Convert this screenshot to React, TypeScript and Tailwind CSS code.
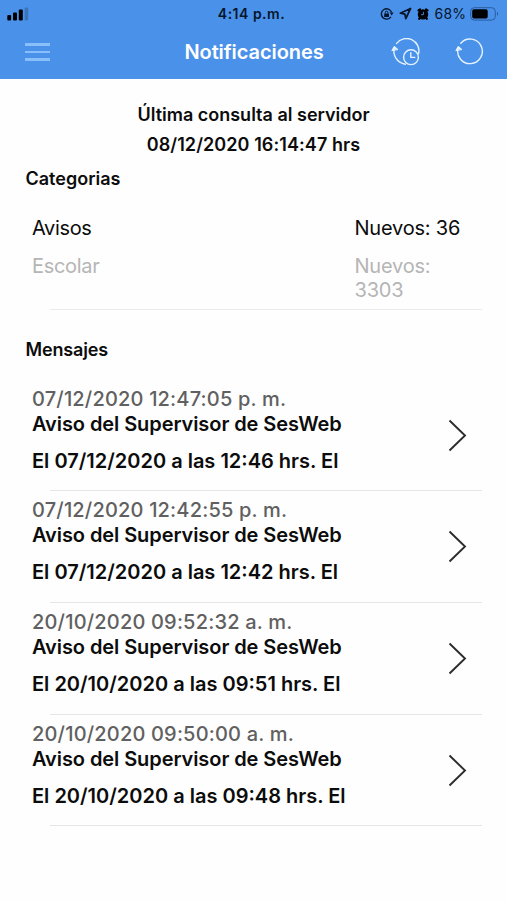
import React from "react";

const messages = [
  {
    date: "07/12/2020 12:47:05 p. m.",
    title: "Aviso del Supervisor de SesWeb",
    body: "El 07/12/2020 a las 12:46 hrs. El",
  },
  {
    date: "07/12/2020 12:42:55 p. m.",
    title: "Aviso del Supervisor de SesWeb",
    body: "El 07/12/2020 a las 12:42 hrs. El",
  },
  {
    date: "20/10/2020 09:52:32 a. m.",
    title: "Aviso del Supervisor de SesWeb",
    body: "El 20/10/2020 a las 09:51 hrs. El",
  },
  {
    date: "20/10/2020 09:50:00 a. m.",
    title: "Aviso del Supervisor de SesWeb",
    body: "El 20/10/2020 a las 09:48 hrs. El",
  },
];

const StatusBar = () => {
  return (
    <div className="grid grid-cols-3 items-center h-[27px] pl-[7px] pr-[8px] text-[#06162b]">
      <svg width="22" height="14" viewBox="0 0 22 14" fill="#000">
        <rect x="0.3" y="8" width="3.8" height="5.5" rx="1" />
        <rect x="6" y="5.5" width="4" height="8" rx="1" />
        <rect x="11.8" y="2.5" width="4" height="11" rx="1" />
        <rect x="17.6" y="0.5" width="3.6" height="13" rx="1" opacity="0.2" />
      </svg>
      <div className="-ml-[3px] text-center text-[14px] font-semibold tracking-[0.5px]">
        4:14 p.m.
      </div>
      <div className="flex items-center justify-end">
        <svg width="14" height="14" viewBox="0 0 14 14" fill="none" stroke="currentColor">
          <path d="M10.9 9.8A5.2 5.2 0 1 1 11.5 5.4" strokeWidth="1.4" />
          <path d="M9.8 5.6h3.8l-1.9 2.8z" fill="currentColor" stroke="none" />
          <rect x="4.2" y="6.4" width="4.8" height="3.5" rx="0.5" fill="currentColor" stroke="none" />
          <path d="M5.3 6.6V5.4a1.3 1.3 0 0 1 2.6 0v1.2" strokeWidth="1" />
        </svg>
        <svg className="ml-[5px]" width="13" height="13" viewBox="0 0 13 13" fill="none" stroke="currentColor" strokeWidth="1.8" strokeLinejoin="round">
          <path d="M11.5 1.5 1.3 6.2l4.6.9.9 4.5z" />
        </svg>
        <svg className="ml-[4px]" width="14" height="14" viewBox="0 0 14 14">
          <circle cx="7" cy="7.4" r="5.2" fill="#000" />
          <path d="M2.5 3.3 4 2.3M11.5 3.3 10 2.3M3.2 11.8l.5-.6M10.8 11.8l-.5-.6" stroke="#000" strokeWidth="2.2" strokeLinecap="round" />
          <path d="M7.4 4.8v2.9H5" fill="none" stroke="#4a90e8" strokeWidth="0.9" />
        </svg>
        <span className="ml-[5px] text-[14px] tracking-[0.1px] whitespace-nowrap">
          68%
        </span>
        <svg className="ml-[4px] shrink-0" width="29" height="14" viewBox="0 0 29 14">
          <rect x="0.7" y="0.7" width="24.6" height="12.4" rx="3.6" fill="none" stroke="#2a5d9d" strokeWidth="1" />
          <rect x="2.2" y="2.2" width="15.5" height="9.4" rx="1.8" fill="#000" />
          <path d="M27 4.8c1.5.7 1.5 3.5 0 4.2z" fill="#2a5d9d" />
        </svg>
      </div>
    </div>
  );
};

const NavBar = () => {
  return (
    <div className="grid grid-cols-3 items-center h-[52px] pl-[25px] pr-[23px] text-white">
      <div className="flex flex-col gap-[5px] w-[25px] -mt-[2px]">
        <span className="h-[2.5px] bg-[#89c0fc]"></span>
        <span className="h-[2.5px] bg-[#89c0fc]"></span>
        <span className="h-[2.5px] bg-[#89c0fc]"></span>
      </div>
      <h1 className="-ml-[1px] text-center text-[20px] font-semibold -mt-[2px] tracking-[-0.08px]">
        Notificaciones
      </h1>
      <div className="flex items-center justify-end gap-[35px] -mt-[2px]">
        <svg width="29" height="28" viewBox="0 0 29 28" fill="none" stroke="#e4f2ff" strokeWidth="1.4" strokeLinecap="round">
          <path d="M5.6 5.4A12.4 12.4 0 0 1 27.6 15.6" />
          <path d="M3.2 9.5C1.5 17 5.8 25 14.3 26.3" />
          <path d="M1 12.3l2.3-4 3.4 3z" fill="#e4f2ff" strokeWidth="1" />
          <circle cx="20" cy="19.2" r="7.4" />
          <path d="M19.8 14.6v4.8h4" />
        </svg>
        <svg width="29" height="28" viewBox="0 0 29 28" fill="none" stroke="#e4f2ff" strokeWidth="1.4" strokeLinecap="round">
          <path d="M5.8 5.2A12.3 12.3 0 1 1 3.3 9.6" />
          <path d="M1 12.3l2.3-4 3.4 3z" fill="#e4f2ff" strokeWidth="1" />
        </svg>
      </div>
    </div>
  );
};

const App = () => {
  return (
    <div className="h-[900px] w-full overflow-hidden bg-[#fefefe] font-['Inter',sans-serif] text-[#0c0c0c]">
      <header className="h-[79px] bg-[#4a91ea]">
        <StatusBar />
        <NavBar />
      </header>

      <div className="pt-[21px] text-center text-[18px] leading-[29px] font-semibold">
        <p>Última consulta al servidor</p>
        <p className="mt-px tracking-[0.08px]">08/12/2020 16:14:47 hrs</p>
      </div>

      <h2 className="mt-[7px] pl-[25.5px] text-[18px] leading-[26px] font-semibold">
        Categorias
      </h2>
      <div className="ml-[32px] mr-[25px] mt-[24px] text-[20px] leading-[25px] tracking-[-0.2px]">
        <div className="flex">
          <div className="w-[322.5px] tracking-[-0.35px]">Avisos</div>
          <div>Nuevos: 36</div>
        </div>
        <div className="flex mt-[12.5px] leading-[24.5px] text-[#b5b5b5]">
          <div className="w-[322.5px] tracking-[-0.3px]">Escolar</div>
          <div className="w-[110px]">Nuevos: 3303</div>
        </div>
      </div>
      <div className="ml-[50px] mr-[25px] mt-[6px] h-[1.5px] bg-[#ebebeb]"></div>

      <h2 className="mt-[26.5px] pl-[25.5px] text-[18px] leading-[26px] font-semibold tracking-[-0.15px]">
        Mensajes
      </h2>
      <div className="mt-[17.3px]">
        {messages.map((message) => (
          <div key={message.date} className="h-[111.67px]">
            <div className="flex items-center h-[110.5px] pl-[32px] pr-[40px]">
              <div className="grow -mt-[9.5px] text-[20px] leading-[25px] font-semibold tracking-[-0.08px]">
                <p className="font-medium text-[#606060] tracking-[0.18px]">
                  {message.date}
                </p>
                <p>{message.title}</p>
                <p className="mt-[12px] tracking-[0px]">{message.body}</p>
              </div>
              <svg width="19" height="33" viewBox="0 0 19 33" fill="none" stroke="#2c2c2c" strokeWidth="1.9">
                <path d="M1.5 1.5 17 16.5 1.5 31.5" />
              </svg>
            </div>
            <div className="ml-[50px] mr-[25px] h-[1.17px] bg-[#e6e6e6]"></div>
          </div>
        ))}
      </div>
    </div>
  );
};

export default App;
